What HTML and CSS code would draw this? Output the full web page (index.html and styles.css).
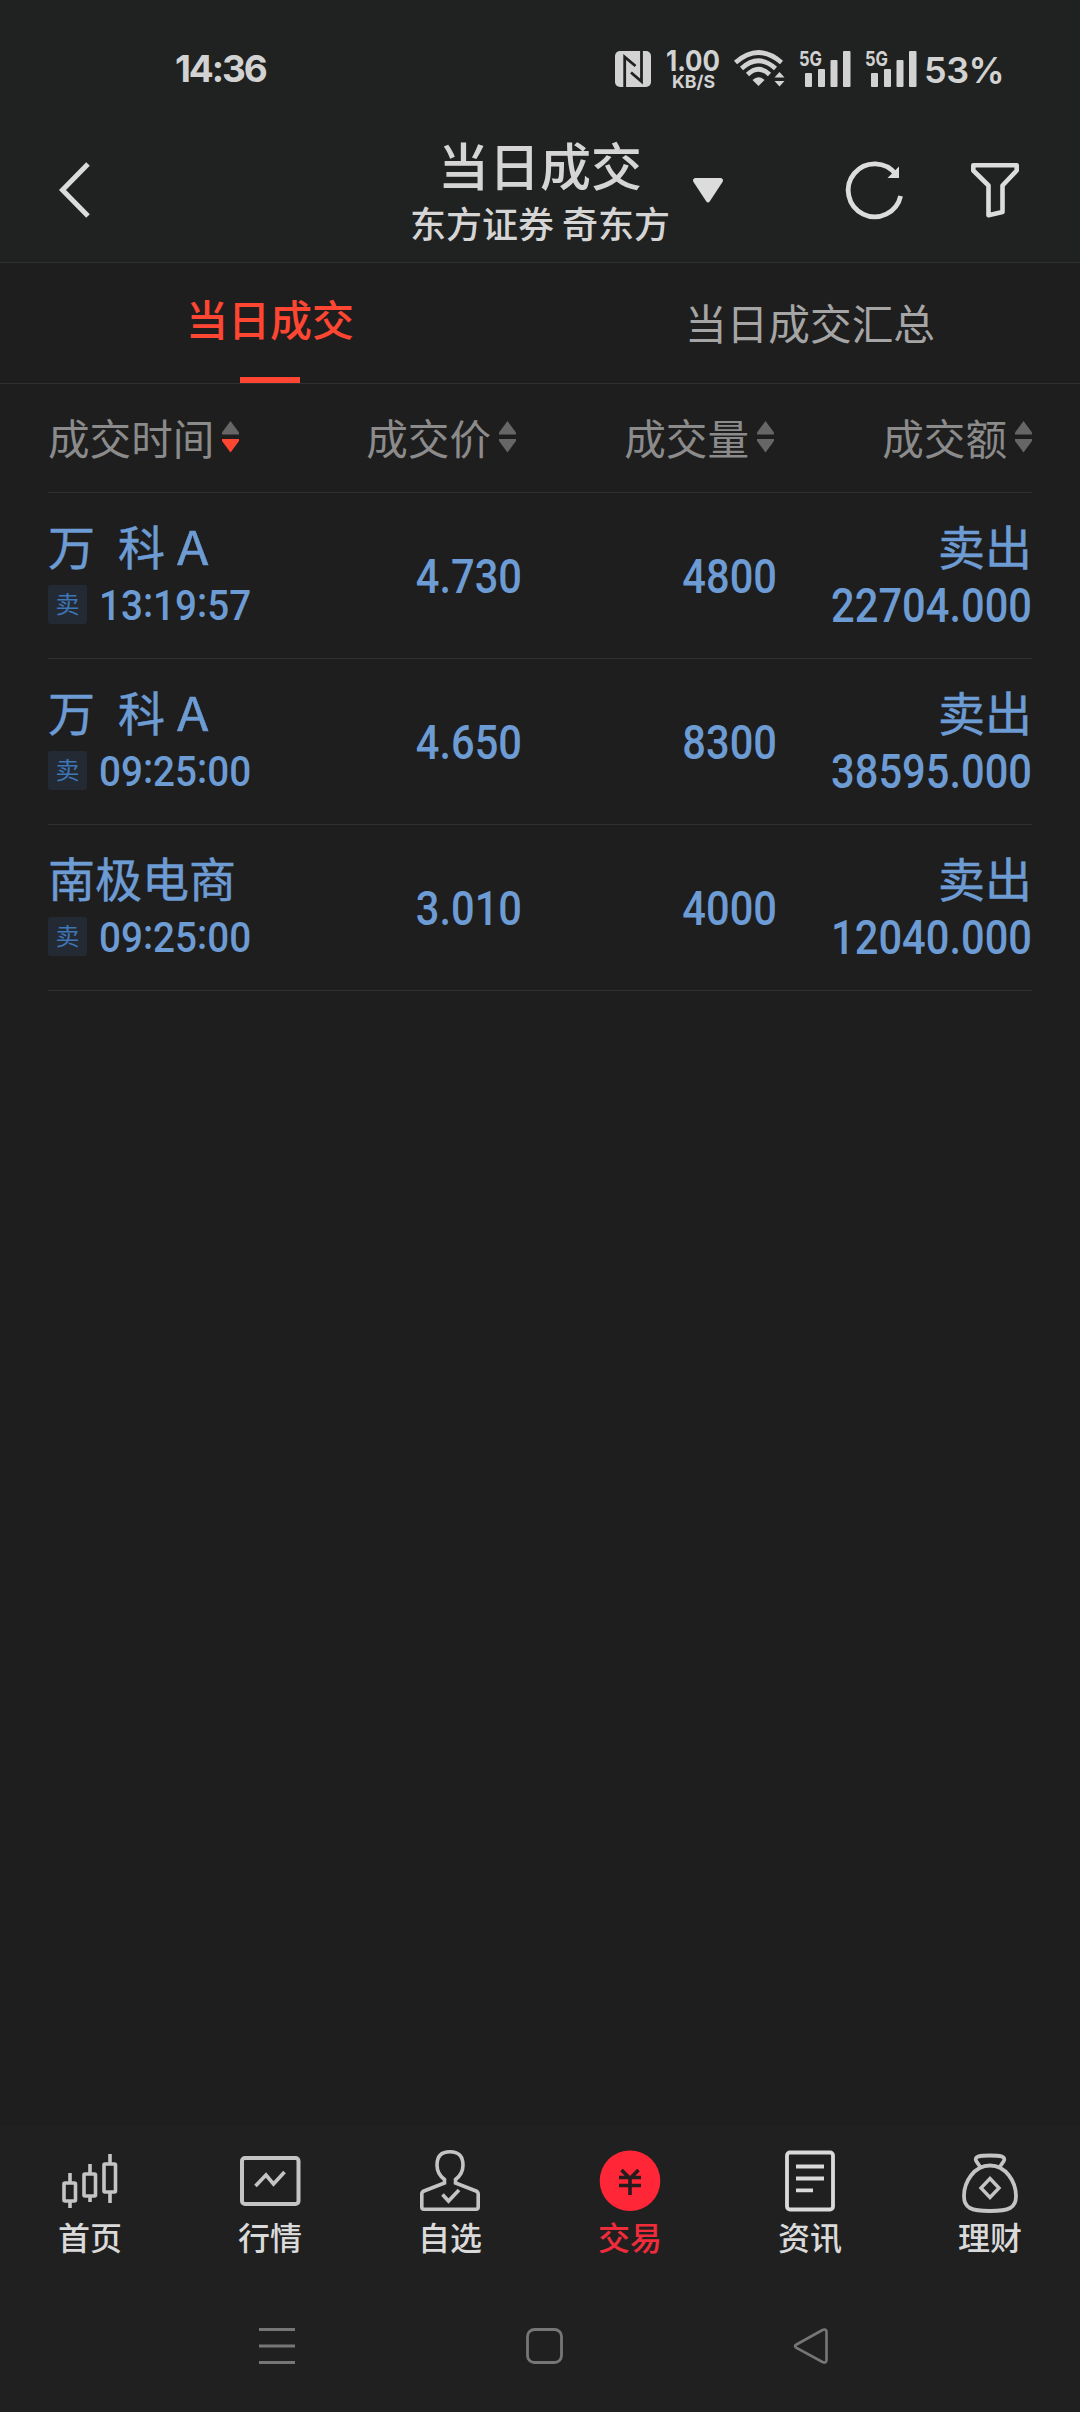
FILE: index.html
```html
<!DOCTYPE html>
<html lang="zh-CN">
<head>
<meta charset="utf-8">
<title>当日成交</title>
<link rel="stylesheet" href="styles.css">
</head>
<body>
<div class="screen">
  <header class="top">
    <div class="status">
      <span class="clock">14:36</span>
      <div class="indicators">
        <svg class="nfc" width="36" height="36" viewBox="0 0 36 36"><rect width="36" height="36" rx="5" fill="#d2d2d2"/><path d="M9.700 36V6L20.500 15M26.500 0V30.500L16 21.500" fill="none" stroke="#202221" stroke-width="2.800"/></svg>
        <svg class="speed" width="54" height="40" viewBox="0 0 54 40"><text x="0" y="21" font-size="28" textLength="54" lengthAdjust="spacingAndGlyphs">1.00</text><text x="6" y="37.500" font-size="17.500" textLength="43" lengthAdjust="spacingAndGlyphs">KB/S</text></svg>
        <svg class="wifi" width="51" height="37" viewBox="0 0 51 37"><g fill="none" stroke="#d2d2d2" stroke-width="4.600"><path d="M1.500 12.500Q24.500-7.500 47.500 12.500"/><path d="M7.500 18.500Q24.500 3 41.500 18.500"/><path d="M13.500 24.500Q24.500 14 35.500 24.500"/></g><path d="M18.500 30Q24.500 24.500 30.500 30L24.500 36Z" fill="#d2d2d2"/><path d="M40.500 27.500L45.500 22L50.500 27.500ZM40.500 31L45.500 36.500L50.500 31Z" fill="#d2d2d2"/></svg>
        <svg class="signal" width="52" height="37" viewBox="0 0 52 37"><text x="0" y="16" font-size="20.500" textLength="23" lengthAdjust="spacingAndGlyphs">5G</text><g fill="#d2d2d2"><rect x="6" y="23" width="7" height="14" rx="1"/><rect x="19" y="19" width="7" height="18" rx="1"/><rect x="31.500" y="10" width="7" height="27" rx="1"/><rect x="44" y="1" width="7.500" height="36" rx="1"/></g></svg>
        <svg class="signal" width="52" height="37" viewBox="0 0 52 37"><text x="0" y="16" font-size="20.500" textLength="23" lengthAdjust="spacingAndGlyphs">5G</text><g fill="#d2d2d2"><rect x="6" y="23" width="7" height="14" rx="1"/><rect x="19" y="19" width="7" height="18" rx="1"/><rect x="31.500" y="10" width="7" height="27" rx="1"/><rect x="44" y="1" width="7.500" height="36" rx="1"/></g></svg>
        <span class="battery">53%</span>
      </div>
    </div>
    <div class="titlebar">
      <div class="side"><svg width="32" height="56" viewBox="0 0 32 56"><path d="M29 2L3.500 28L29 54" fill="none" stroke="#dcdcdc" stroke-width="5"/></svg></div>
      <div class="heading">
        <h1>当日成交</h1>
        <p>东方证券 奇东方</p>
      </div>
      <div class="actions">
        <svg class="caret" width="30" height="25" viewBox="0 0 30 25"><path d="M2 0H28Q31 1 29.500 4L17 23Q15 26 13 23L.5 4Q-1 1 2 0Z" fill="#dcdcdc"/></svg>
        <svg class="refresh" width="60" height="60" viewBox="0 0 60 60"><path d="M55.600 36A26.500 26.500 0 1 1 51 14.500" fill="none" stroke="#dcdcdc" stroke-width="4.800"/><path d="M54 6.500V18H42.500Z" fill="#dcdcdc"/></svg>
        <svg class="filter" width="48" height="56" viewBox="0 0 48 56"><path d="M2.300 3.300H45.700V8.500L31.500 23.500V50L17.500 53.200V23.500L2.300 8.500Z" fill="none" stroke="#dcdcdc" stroke-width="4.600" stroke-linejoin="round"/></svg>
      </div>
    </div>
  </header>
  <nav class="tabs">
    <div class="tab active"><span>当日成交</span></div>
    <div class="tab"><span>当日成交汇总</span></div>
  </nav>
  <main class="list">
    <div class="columns">
      <div class="col">成交时间<svg class="sort desc" width="17" height="32" viewBox="0 0 17 32"><path class="up" d="M8.500 0L17 11.500V13.500H0V11.500Z"/><path class="down" d="M0 18H17V20L8.500 31.500L0 20Z"/></svg></div>
      <div class="col">成交价<svg class="sort" width="17" height="32" viewBox="0 0 17 32"><path class="up" d="M8.500 0L17 11.500V13.500H0V11.500Z"/><path class="down" d="M0 18H17V20L8.500 31.500L0 20Z"/></svg></div>
      <div class="col">成交量<svg class="sort" width="17" height="32" viewBox="0 0 17 32"><path class="up" d="M8.500 0L17 11.500V13.500H0V11.500Z"/><path class="down" d="M0 18H17V20L8.500 31.500L0 20Z"/></svg></div>
      <div class="col">成交额<svg class="sort" width="17" height="32" viewBox="0 0 17 32"><path class="up" d="M8.500 0L17 11.500V13.500H0V11.500Z"/><path class="down" d="M0 18H17V20L8.500 31.500L0 20Z"/></svg></div>
    </div>
    <div class="row">
      <div class="stock"><div class="name">万  科 <b>A</b></div><div class="meta"><span class="tag">卖</span><span class="time">13<i>:</i>19<i>:</i>57</span></div></div>
      <div class="num price">4.730</div>
      <div class="num amount">4800</div>
      <div class="total"><div class="name">卖出</div><div class="num">22704.000</div></div>
    </div>
    <div class="row">
      <div class="stock"><div class="name">万  科 <b>A</b></div><div class="meta"><span class="tag">卖</span><span class="time">09<i>:</i>25<i>:</i>00</span></div></div>
      <div class="num price">4.650</div>
      <div class="num amount">8300</div>
      <div class="total"><div class="name">卖出</div><div class="num">38595.000</div></div>
    </div>
    <div class="row">
      <div class="stock"><div class="name">南极电商</div><div class="meta"><span class="tag">卖</span><span class="time">09<i>:</i>25<i>:</i>00</span></div></div>
      <div class="num price">3.010</div>
      <div class="num amount">4000</div>
      <div class="total"><div class="name">卖出</div><div class="num">12040.000</div></div>
    </div>
  </main>
  <footer class="bottom">
    <nav class="menu">
      <div class="item"><svg width="64" height="64" viewBox="0 0 64 64"><g fill="none" stroke="#c4c4c4" stroke-width="3.600"><rect x="6" y="27" width="11.500" height="18" rx="1"/><rect x="26" y="18" width="11.500" height="22" rx="1"/><rect x="46" y="8" width="11.500" height="28" rx="1"/><path d="M12 17V27M12 45V52M32 8V18M32 40V46M52 -2V8M52 36V47"/></g></svg><span>首页</span></div>
      <div class="item"><svg width="64" height="64" viewBox="0 0 64 64"><g fill="none" stroke="#c4c4c4" stroke-width="4"><rect x="4" y="2" width="56.500" height="46" rx="3"/><path d="M17.500 30L28 19L35.500 28L46.500 16" stroke-width="3.600"/></g></svg><span>行情</span></div>
      <div class="item"><svg width="64" height="64" viewBox="0 0 64 64"><g fill="none" stroke="#c4c4c4" stroke-width="3.600"><path d="M26.500 23.500V27L6 35Q3.800 36 3.800 38V51Q3.800 53.200 6 53.200H58Q60.200 53.200 60.200 51V38Q60.200 36 58 35L37.500 27V23.500Q45 18 45 9Q45-4.200 32-4.200Q19-4.200 19 9Q19 18 26.500 23.500Z"/><path d="M24.500 38.500L30.500 45L41 34"/></g></svg><span>自选</span></div>
      <div class="item current"><svg width="64" height="64" viewBox="0 0 64 64"><circle cx="32" cy="24.800" r="30.300" fill="#ff2737"/><path d="M23.500 14L32 22.500L40.500 14M21 21.500H43M21 29.500H43M32 21V39" fill="none" stroke="#241c1d" stroke-width="3.600"/></svg><span>交易</span></div>
      <div class="item"><svg width="64" height="64" viewBox="0 0 64 64"><g fill="none" stroke="#dadada" stroke-width="3.800"><rect x="9" y="-3.500" width="46" height="57" rx="3"/><path d="M18 10.500H46M18 22.500H46M18 34.300H35"/></g></svg><span>资讯</span></div>
      <div class="item"><svg width="64" height="64" viewBox="0 0 64 64"><g fill="none" stroke="#c4c4c4" stroke-width="3.800"><path d="M23 12L18.500 5.500C15 0 23-.5 32-.5S49 0 45.500 5.500L41 12"/><path d="M32 9.500C16 9.500 6 26 6 40C6 52 13 55 32 55S58 52 58 40C58 26 48 9.500 32 9.500Z"/><path d="M32 22.500L41 32L32 41.500L23 32Z" stroke-width="3.400"/></g></svg><span>理财</span></div>
    </nav>
    <div class="system">
      <svg width="36" height="38" viewBox="0 0 36 38"><path d="M0 2.500H36M0 19H36M0 35.500H36" stroke="#767676" stroke-width="3"/></svg>
      <svg width="38" height="38" viewBox="0 0 38 38"><rect x="2.500" y="2.500" width="34" height="33" rx="7" fill="none" stroke="#767676" stroke-width="2.800"/></svg>
      <svg width="36" height="38" viewBox="0 0 36 38"><path d="M3.500 17.500L29.500 3Q33.500 1.500 33.500 5V33Q33.500 36.500 29.500 35L3.500 20.800Q.5 19 3.500 17.500Z" fill="none" stroke="#767676" stroke-width="2.600"/></svg>
    </div>
  </footer>
</div>
</body>
</html>
```
FILE: styles.css
```css
* { box-sizing: border-box; margin: 0; padding: 0; }
body { background: #1e1e1e; font-family: "Noto Sans CJK SC", sans-serif; }
svg { display: block; flex: none; overflow: visible; }
.screen { width: 1080px; height: 2412px; display: flex; flex-direction: column; }

.top { height: 263px; background: #202221; border-bottom: 1px solid #303231; color: #d5d5d5; }
.status { height: 120px; padding: 50px 78px 0 175px; display: flex; justify-content: space-between; align-items: flex-start; font-family: Inter, sans-serif; font-weight: 700; color: #d2d2d2; }
.status text { fill: #d2d2d2; font-family: Inter, sans-serif; font-weight: 700; }
.clock { font-size: 37px; line-height: 38px; letter-spacing: -2.1px; }
.indicators { display: flex; align-items: flex-start; }
.nfc { margin-top: 1px; }
.speed { margin-left: 15px; }
.wifi { margin-left: 14px; }
.signal { margin-left: 14px; }
.battery { margin-left: 7px; width: 78px; font-size: 36px; font-weight: 600; line-height: 40px; letter-spacing: -0.5px; white-space: nowrap; }

.titlebar { height: 142px; padding: 14px 60px 0 59px; display: grid; grid-template-columns: 299px 1fr 298px; }
.side { padding-top: 28px; }
.heading { text-align: center; }
.heading h1 { font-size: 51px; line-height: 60px; font-weight: 500; }
.heading p { font-size: 36px; line-height: 56px; font-weight: 500; }
.actions { display: flex; align-items: center; height: 112px; }
.caret { margin-left: -29px; }
.refresh { margin-left: 122px; }
.filter { margin-left: 66px; }

.tabs { height: 121px; display: grid; grid-template-columns: 1fr 1fr; border-bottom: 1px solid #303030; }
.tab { display: flex; justify-content: center; align-items: center; padding-bottom: 2px; font-size: 41.7px; color: #a5a5a5; }
.tab.active { flex-direction: column; justify-content: flex-end; padding: 0; font-size: 42px; font-weight: 500; color: #fe4632; }
.tab.active span { line-height: 60px; }
.tab.active::after { content: ""; width: 60px; height: 6px; margin-top: 29px; background: #fe4632; }

.list { flex: 1; padding: 0 48px; }
.columns, .row { display: grid; grid-template-columns: 210px 258px 258px 258px; border-bottom: 1px solid #303030; }
.columns { height: 109px; font-size: 41.6px; color: #8b8b8b; }
.col { display: flex; justify-content: flex-end; align-items: center; line-height: 60px; padding-bottom: 3px; }
.col:first-child { justify-content: flex-start; }
.sort { margin-left: 8px; fill: #666; }
.sort.desc .down { fill: #fe4632; }
.row { height: 166px; padding-top: 24px; color: #6d9bd3; }
.name { font-size: 47px; line-height: 56px; height: 57px; white-space: pre; word-spacing: 1px; -webkit-text-stroke: 0.5px currentColor; }
.name b { display: inline-block; font-weight: 400; transform: scaleX(1.1); transform-origin: left; }
.meta { display: flex; align-items: center; height: 60px; }
.tag { flex: none; width: 39px; height: 39px; border-radius: 3px; background: #232a34; color: #3f76b5; font-size: 24px; line-height: 36px; text-align: center; }
.time { margin-left: 12px; font: 500 42px/60px Roboto, sans-serif; padding-top: 3px; transform: scaleX(.92); transform-origin: left; }
.time i { font-style: normal; position: relative; top: -3px; }
.num { font: 500 49px/118px Roboto, sans-serif; text-align: right; transform: scaleX(.85); transform-origin: right; }
.price, .amount { padding-top: 1px; }
.price { margin-right: -6px; }
.amount { margin-right: -3px; }
.total .num { line-height: 64px; }
.total { text-align: right; }

.bottom { height: 286px; background: #202020; }
.menu { height: 144px; padding-top: 30px; display: grid; grid-template-columns: repeat(6, 1fr); }
.item { display: flex; flex-direction: column; align-items: center; color: #dadada; font-size: 32px; font-weight: 500; }
.item span { line-height: 40px; margin-top: -4px; }
.item.current { color: #f02c3b; }
.system { display: flex; justify-content: space-between; padding: 57px 251px 0 259px; }
```
